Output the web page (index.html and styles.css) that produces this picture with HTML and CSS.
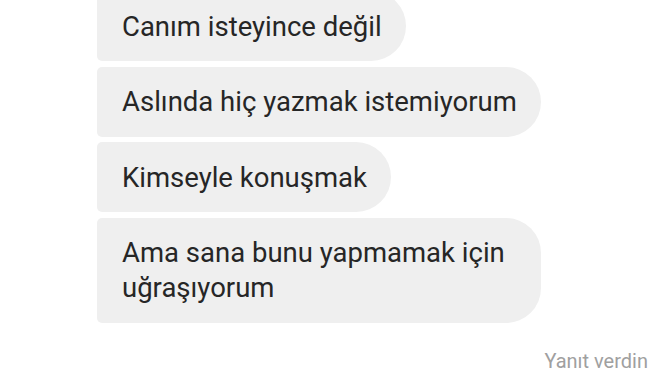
FILE: index.html
```html
<!DOCTYPE html>
<html lang="tr">
<head>
    <meta charset="UTF-8">
    <meta name="viewport" content="width=device-width, initial-scale=1.0">
    <title>Mesajlar</title>
    <link rel="stylesheet" href="styles.css">
</head>
<body>
    <div class="thread">
        <div class="messages">
            <div class="bubble">Canım isteyince değil</div>
            <div class="bubble">Aslında hiç yazmak istemiyorum</div>
            <div class="bubble">Kimseyle konuşmak</div>
            <div class="bubble">Ama sana bunu yapmamak için uğraşıyorum</div>
        </div>
        <div class="status">Yanıt verdin</div>
    </div>
</body>
</html>
```

FILE: styles.css
```css
body {
    margin: 0;
    background-color: #fff;
    font-family: 'Roboto', 'Noto Sans', sans-serif;
    color: #262626;
    overflow: hidden;
}
.thread {
    display: flex;
    flex-direction: column;
    padding: 0 24px 0 97px;
}
.messages {
    display: flex;
    flex-direction: column;
    align-items: flex-start;
    gap: 5.5px;
    margin-top: -9px;
}
.bubble {
    box-sizing: border-box;
    max-width: 444px;
    background-color: #efefef;
    font-size: 27.5px;
    line-height: 35px;
    padding: 17.5px 24px 17.5px 25px;
    border-radius: 5px 35px 35px 5px;
}
.status {
    align-self: flex-end;
    margin-top: 26px;
    font-size: 20px;
    color: #a0a0a0;
}
```
